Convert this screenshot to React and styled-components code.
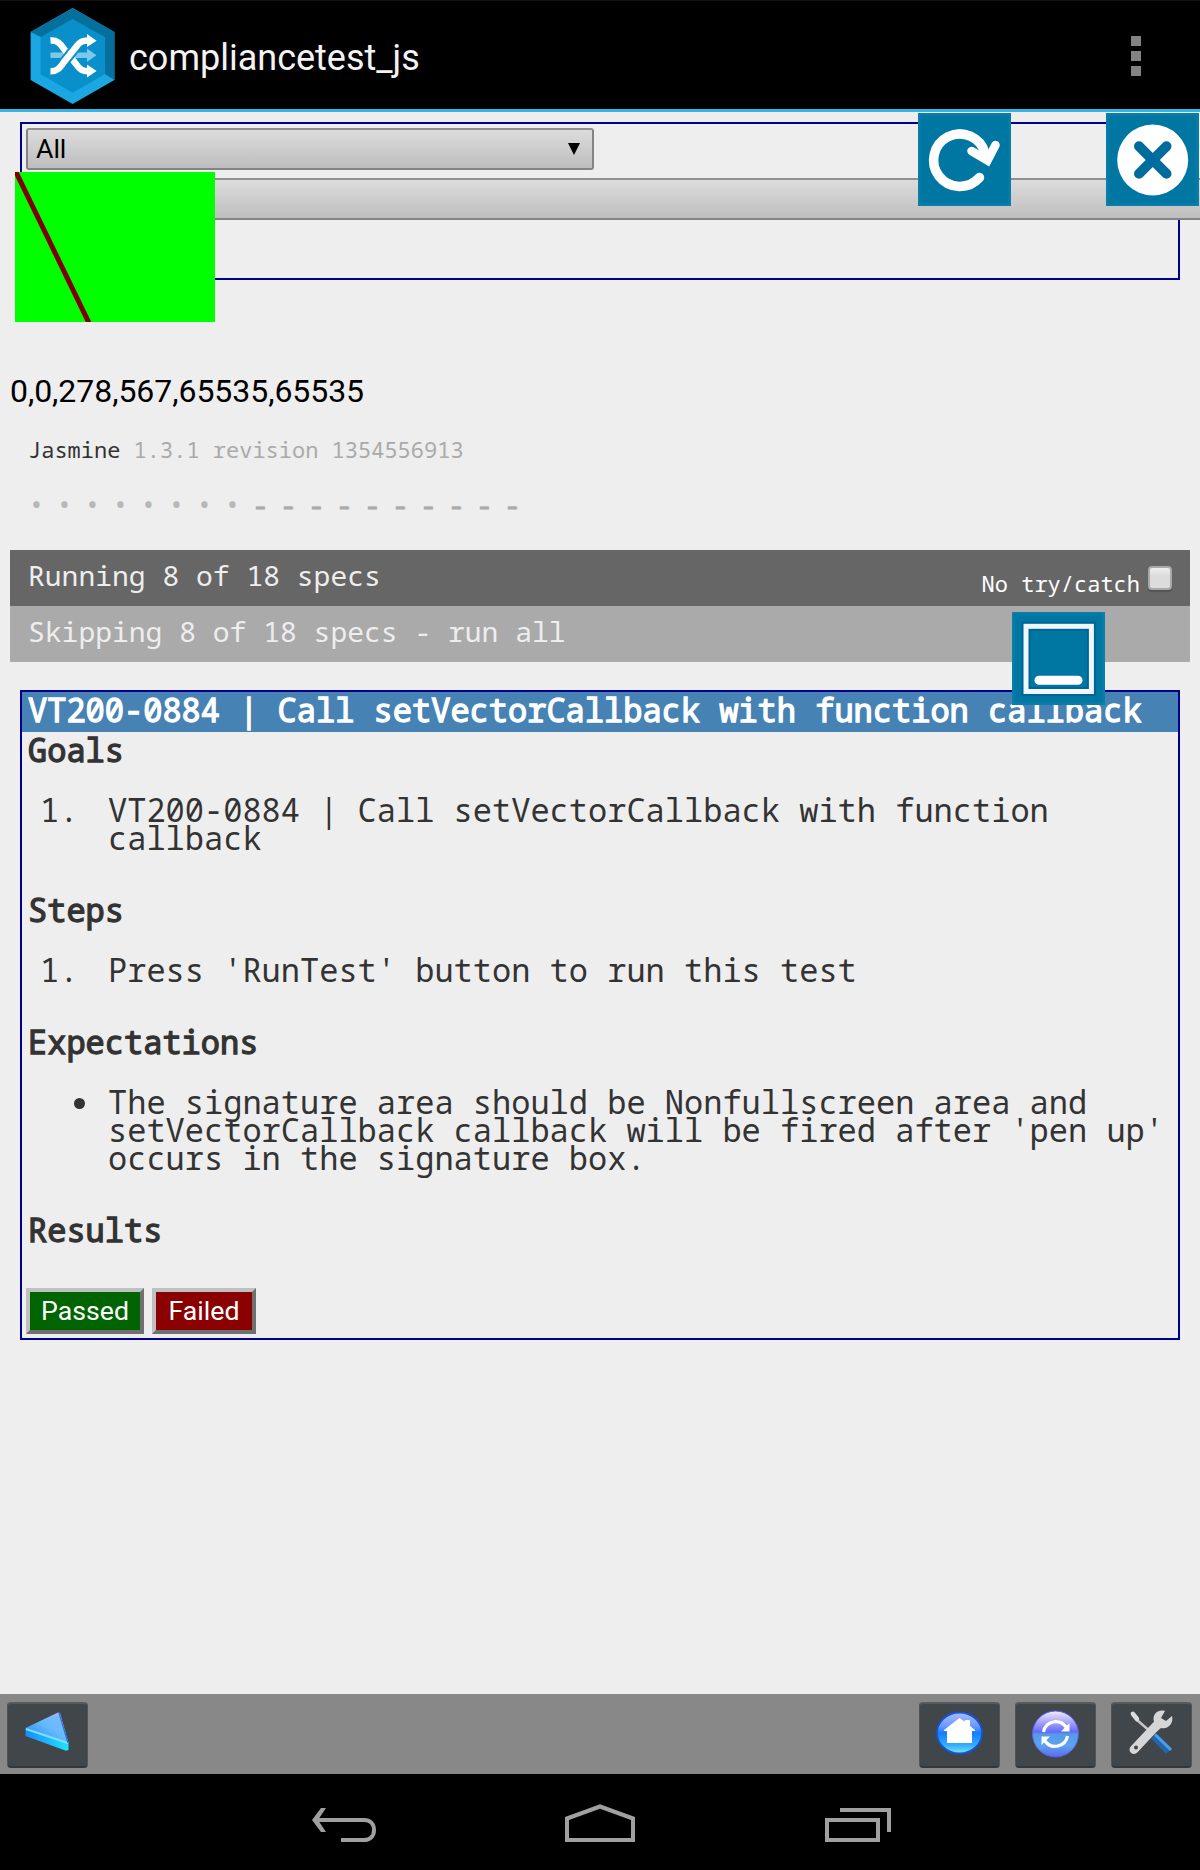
import React from "react";
import styled, { createGlobalStyle } from "styled-components";

const MONO = `"Noto Sans Mono", "DejaVu Sans Mono", monospace`;

const GlobalStyle = createGlobalStyle`
  * { box-sizing: border-box; }
  body { margin: 0; background: #eee; font-family: Roboto, sans-serif; }
`;

const Screen = styled.div`
  position: relative;
  display: flex;
  flex-direction: column;
  width: 1200px;
  height: 1870px;
  overflow: hidden;
  background: #eee;
`;

const ActionBar = styled.header`
  display: flex;
  align-items: center;
  height: 112px;
  flex: none;
  padding: 0 59px 0 30px;
  background: #000;
  border-bottom: 3px solid #33b5e5;
  box-shadow: inset 0 1px 0 #111;
`;

const AppTitle = styled.h1`
  flex: 1;
  margin: 7px 0 0 13px;
  font-size: 36px;
  line-height: 42px;
  font-weight: 400;
  color: #f3f3f3;
`;

const Overflow = styled.div`
  display: flex;
  flex-direction: column;
  gap: 5px;
  margin-top: 3px;
`;

const OverflowDot = styled.i`
  width: 10px;
  height: 10px;
  background: #848484;
`;

const Content = styled.main`
  flex: 1;
  display: flex;
  flex-direction: column;
  padding: 10px 10px 0;
`;

const Panel = styled.section`
  flex: none;
  margin: 0 10px;
  border: 2px solid #00008b;
`;

const Controls = styled(Panel)`
  display: flex;
  flex-direction: column;
  gap: 8px;
  height: 158px;
  padding: 4px;
`;

const SelectBox = styled.div`
  display: flex;
  flex: none;
  align-items: center;
  justify-content: space-between;
  width: ${(p) => p.$width}px;
  height: 42px;
  padding: 0 12px 0 8px;
  border: 2px solid #848484;
  border-top-color: #909090;
  border-radius: 3px;
  background: linear-gradient(#dcdcdc, #bebebe);
  font-size: 26.67px;
  line-height: 38px;
  color: #000;
`;

const VectorText = styled.p`
  margin: 92px 0 0;
  font-size: 32px;
  line-height: 38px;
  letter-spacing: -0.05px;
  color: #000;
`;

const Reporter = styled.div`
  font-family: ${MONO};
  font-size: 28px;
  line-height: 28px;
  color: #333;
`;

const Banner = styled.div`
  margin-top: 25px;
  padding-left: 18px;
  font-size: 22px;
  line-height: 28px;
  color: #333;
`;

const Version = styled.span`
  color: #aaa;
`;

const Symbols = styled.ul`
  display: flex;
  height: 28px;
  margin: 27px 0 0;
  padding: 0 0 0 18px;
  list-style: none;
`;

const Mark = styled.li`
  width: 28px;
  color: ${(p) => (p.$passed ? "#b8b8b8" : "#aaa")};
  -webkit-text-stroke: ${(p) => (p.$passed ? 0 : "0.8px")} currentColor;
`;

const Bar = styled.div`
  display: flex;
  justify-content: space-between;
  height: 56px;
  margin-top: ${(p) => (p.$skipped ? 0 : 32)}px;
  padding: 0 18px;
  line-height: 51px;
  color: #eee;
  background: ${(p) => (p.$skipped ? "#aaa" : "#666")};
`;

const TryCatch = styled.label`
  display: flex;
  gap: 8px;
  font-size: 22px;
  line-height: 67px;
  color: #fff;
`;

const Check = styled.span`
  width: 24px;
  height: 24px;
  margin-top: 16px;
  border: 2px solid #a9a9a9;
  border-radius: 4px;
  background: linear-gradient(#eee, #dcdcdc 40%, #dcdcdc);
  box-shadow: 0 2px 1px #555;
`;

const TestPanel = styled(Panel)`
  margin-top: 28px;
  height: 650px;
  font-family: ${MONO};
  font-size: 32px;
  line-height: 28px;
  color: #333;
`;

const TestTitle = styled.h2`
  height: 40px;
  margin: 0;
  padding: 4px 6px 0;
  font-size: 32px;
  line-height: 28px;
  font-weight: 400;
  -webkit-text-stroke: 1.3px currentColor;
  color: #fff;
  background: #4682b4;
  white-space: nowrap;
`;

const TestBody = styled.div`
  padding: 4px 0 0 6px;
`;

const Heading = styled.h3`
  margin: 0;
  font-size: 32px;
  line-height: 28px;
  font-weight: 400;
  -webkit-text-stroke: 1.3px currentColor;
`;

const Items = styled.div`
  display: flex;
  flex-direction: column;
  margin: 32px 0 44px;
`;

const Item = styled.div`
  display: grid;
  grid-template-columns: 80px 1fr;
  white-space: nowrap;
`;

const Ordinal = styled.span`
  padding-left: 12px;
`;

const Bullet = styled.span`
  width: 11px;
  height: 11px;
  margin: 10px 0 0 46px;
  border-radius: 50%;
  background: #333;
`;

const Results = styled.div`
  display: flex;
  gap: 8px;
  margin: 44px 0 0 -2px;
`;

const ResultButton = styled.button`
  width: ${(p) => p.$width}px;
  height: 46px;
  padding: 0;
  border: 4px solid;
  border-color: #c0c0c0 #707070 #707070 #c0c0c0;
  background: ${(p) => p.$color};
  color: #fff;
  font: 26.67px/36px Roboto, sans-serif;
`;

const Signature = styled.svg`
  position: absolute;
  left: 15px;
  top: 172px;
  background: #0f0;
`;

const FloatButton = styled.button`
  position: absolute;
  left: ${(p) => p.$x}px;
  top: ${(p) => p.$y}px;
  width: 93px;
  height: 93px;
  padding: 0;
  border: 0;
  background: #0077a3;
  box-shadow: inset 0 0 3px 2px #0d80a8;
  svg { display: block; }
`;

const Toolbar = styled.div`
  display: flex;
  flex: none;
  gap: 15px;
  height: 80px;
  padding: 8px 8px 8px 7px;
  background: #888;
`;

const ToolButton = styled.button`
  width: 81px;
  height: 66px;
  padding: 0;
  border: 1px solid #505558;
  border-top: 2px solid #555a5d;
  border-bottom: 2px solid #35383b;
  border-radius: 4px;
  background: #41464a;
  svg { display: block; margin: -2px -1px; }
`;

const Spacer = styled.div`
  flex: 1;
`;

const NavBar = styled.nav`
  flex: none;
  height: 96px;
  background: #000;
  display: flex;
  justify-content: center;
  align-items: flex-start;
  gap: 180px;
  padding-top: 28px;
`;

const NavIcon = ({ children }) => (
  <svg width="76" height="42" viewBox="0 0 76 42" fill="none" stroke="#a0a0a0" strokeWidth="4">
    {children}
  </svg>
);

const Logo = () => (
  <svg width="86" height="98" viewBox="30 6 86 98">
    <path d="M72.6 8 114.4 32V80L72.6 104 30.6 80V32Z" fill="#1ba8e2" />
    <path d="M72.6 8 114.4 32V80L104.7 74V37L72.6 40 40.6 37 30.6 32Z" fill="#06709d" />
    <path d="M72.6 19 104.7 37V74.3L72.6 92.7 40.6 74.3V37Z" fill="#0990ca" />
    <path d="M50.5 55.3H88" stroke="#7cc9ec" strokeWidth="5.5" />
    <path d="M87 48.5 96.4 55.3 87 62Z" fill="#7cc9ec" />
    <g fill="none">
      <path d="M50.500 40.500C57 40 60 43 64 49L76 64C80 70 83 71.300 88 71.300" stroke="#fff" strokeWidth="6.500" />
      <path d="M60 67 64 62 76 47C80 42 82 40.500 86 40.500" stroke="#0990ca" strokeWidth="10.500" />
      <path d="M50.500 71.300C57 71.500 60 68 64 62L76 47C80 41.500 83 40.500 88 40.500" stroke="#fff" strokeWidth="6.500" />
    </g>
    <path d="M87 34 96.6 40.7 87 47ZM87 64.5 96.6 71 87 77.5Z" fill="#fff" />
  </svg>
);

const ReloadGlyph = () => (
  <svg width="93" height="93" fill="none" stroke="#fff" strokeWidth="9.5" strokeLinecap="round">
    <path d="M61.5 64.5A26.2 26.2 0 1 1 67 40" />
    <path d="M53.5 38 69.5 47.5 77.5 32" strokeWidth="8.5" />
    <path d="M58 38 70 52 76 37 66 42Z" fill="#fff" stroke="none" />
  </svg>
);

const CloseGlyph = () => (
  <svg width="93" height="93">
    <circle cx="46.7" cy="47" r="35.5" fill="#fff" />
    <path d="M33 33.3 60.5 60.8M60.5 33.3 33 60.8" stroke="#006c9d" strokeWidth="10" strokeLinecap="round" />
  </svg>
);

const MinimizeGlyph = () => (
  <svg width="93" height="93" fill="none">
    <rect x="14" y="14.3" width="65.4" height="65.2" stroke="#00639a" strokeWidth="9" />
    <rect x="14" y="14.3" width="65.4" height="65.2" stroke="#eef7fb" strokeWidth="5" />
    <path d="M27 68.3H66" stroke="#fff" strokeWidth="9" strokeLinecap="round" />
  </svg>
);

const BackGlyph = () => (
  <svg width="81" height="66">
    <defs>
      <linearGradient id="face" x1="0" y1="1" x2="1" y2="0">
        <stop offset="0" stopColor="#1583f5" />
        <stop offset=".55" stopColor="#69baff" />
        <stop offset="1" stopColor="#b4b5f5" />
      </linearGradient>
      <linearGradient id="side">
        <stop offset="0" stopColor="#168cfb" />
        <stop offset="1" stopColor="#24e1ff" />
      </linearGradient>
    </defs>
    <path d="M18.500 26 51 10.500 53 11 61.500 41 Z" fill="url(#face)" />
    <path d="M30 22 52 13 58 36Z" fill="#62bcff" opacity=".5" />
    <path d="M18.500 26 61.500 40V48L59 48.800 18.500 34Z" fill="url(#side)" />
    <path d="M19 27 61 41" stroke="#7de1ff" strokeWidth="2" />
    <path d="M52 11 61 41" stroke="#2376df" strokeWidth="1.200" />
  </svg>
);

const HomeGlyph = () => (
  <svg width="81" height="66">
    <defs>
      <linearGradient id="homeOrb" x2="0" y2="1">
        <stop offset="0" stopColor="#a9bcff" />
        <stop offset=".35" stopColor="#6797ff" />
        <stop offset=".5" stopColor="#147bff" />
        <stop offset=".8" stopColor="#35adff" />
        <stop offset="1" stopColor="#78e9ff" />
      </linearGradient>
    </defs>
    <ellipse cx="40.500" cy="31" rx="22.500" ry="20.500" fill="url(#homeOrb)" stroke="#1454d5" strokeWidth="1.800" />
    <path d="M40.500 16.500 46 20.500V18.500H50.500V24L56 28.500H52.500V40.500H28.500V28.500H25Z" fill="#fff" stroke="#fff" strokeLinejoin="round" />
  </svg>
);

const SyncGlyph = () => (
  <svg width="81" height="66">
    <defs>
      <linearGradient id="syncOrb" x2="0" y2="1">
        <stop offset="0" stopColor="#f0edff" />
        <stop offset=".25" stopColor="#a6a2fa" />
        <stop offset=".46" stopColor="#6268fa" />
        <stop offset=".5" stopColor="#559ae8" />
        <stop offset=".75" stopColor="#5ba3ef" />
        <stop offset="1" stopColor="#6068ee" />
      </linearGradient>
    </defs>
    <circle cx="40.500" cy="32" r="23" fill="url(#syncOrb)" stroke="#5961df" />
    <g fill="none" stroke="#fff" strokeWidth="3.200">
      <path d="M28.500 30A12.500 12.500 0 0 1 51 25" />
      <path d="M52.500 34A12.500 12.500 0 0 1 30 39" />
    </g>
    <path d="M54.500 21V29.500H46ZM26.500 43V34.500H35Z" fill="#fff" />
  </svg>
);

const ToolsGlyph = () => (
  <svg width="81" height="66" strokeLinecap="round">
    <path d="M21 11 26 18 41 31" stroke="#c8c8c8" strokeWidth="2.500" fill="none" />
    <path d="M22 12 26 17" stroke="#ddd" strokeWidth="4.500" />
    <path d="M43 34 58 49" stroke="#2067ae" strokeWidth="8" strokeLinecap="butt" />
    <path d="M44 32.500 60 48" stroke="#4c9fe3" strokeWidth="3" strokeLinecap="butt" />
    <path d="M23 47.500 45 24" stroke="#d6d6d6" strokeWidth="9" />
    <path d="M54 9C46 7 41 13 43 20L40 25 45 30 50 26C57 28 63 21 61 14L55 19 50 16Z" fill="#d6d6d6" />
    <circle cx="25" cy="45.500" r="2" fill="#41464a" />
  </svg>
);

const Spec = ({ title, children }) => (
  <>
    <Heading>{title}</Heading>
    <Items>{children}</Items>
  </>
);

const MARKS = "••••••••----------".split("");

export default function App() {
  return (
    <Screen>
      <GlobalStyle />
      <ActionBar>
        <Logo />
        <AppTitle>compliancetest_js</AppTitle>
        <Overflow>
          <OverflowDot />
          <OverflowDot />
          <OverflowDot />
        </Overflow>
      </ActionBar>

      <Content>
        <Controls>
          <SelectBox $width={568}>
            <span>All</span>
            <svg width="12" height="12">
              <path d="M0 0H12L6 12Z" />
            </svg>
          </SelectBox>
          <SelectBox $width={1300} />
        </Controls>

        <VectorText>0,0,278,567,65535,65535</VectorText>

        <Reporter>
          <Banner>
            Jasmine <Version>1.3.1 revision 1354556913</Version>
          </Banner>
          <Symbols>
            {MARKS.map((m, i) => (
              <Mark key={i} $passed={m === "•"}>{m}</Mark>
            ))}
          </Symbols>
          <Bar>
            <span>Running 8 of 18 specs</span>
            <TryCatch>
              No try/catch
              <Check />
            </TryCatch>
          </Bar>
          <Bar $skipped>
            <span>Skipping 8 of 18 specs - run all</span>
          </Bar>
        </Reporter>

        <TestPanel>
          <TestTitle>VT200-0884 | Call setVectorCallback with function callback</TestTitle>
          <TestBody>
            <Spec title="Goals">
              <Item>
                <Ordinal>1.</Ordinal>
                <span>VT200-0884 | Call setVectorCallback with function<br />callback</span>
              </Item>
            </Spec>
            <Spec title="Steps">
              <Item>
                <Ordinal>1.</Ordinal>
                <span>Press 'RunTest' button to run this test</span>
              </Item>
            </Spec>
            <Spec title="Expectations">
              <Item>
                <Bullet />
                <span>
                  The signature area should be Nonfullscreen area and<br />
                  setVectorCallback callback will be fired after 'pen up'<br />
                  occurs in the signature box.
                </span>
              </Item>
            </Spec>
            <Heading>Results</Heading>
            <Results>
              <ResultButton $width={118} $color="#006400">Passed</ResultButton>
              <ResultButton $width={104} $color="#8b0000">Failed</ResultButton>
            </Results>
          </TestBody>
        </TestPanel>
      </Content>

      <Toolbar>
        <ToolButton><BackGlyph /></ToolButton>
        <Spacer />
        <ToolButton><HomeGlyph /></ToolButton>
        <ToolButton><SyncGlyph /></ToolButton>
        <ToolButton><ToolsGlyph /></ToolButton>
      </Toolbar>

      <NavBar>
        <NavIcon>
          <path d="M9 18H58C64 18 68 22 68 28S64 38 58 38H35" />
          <path d="M6 18 15 6H20L12 18 20 30H15Z" fill="#a0a0a0" stroke="none" />
        </NavIcon>
        <NavIcon>
          <path d="M5 38V16.500L38 4.500 71 16.500V38Z" />
        </NavIcon>
        <NavIcon>
          <path d="M9 18H60V38H9ZM22 8H71V30" />
        </NavIcon>
      </NavBar>

      <Signature width="200" height="150">
        <path d="M0 -2 75 153" stroke="#800000" strokeWidth="5" />
      </Signature>
      <FloatButton $x={918} $y={113}><ReloadGlyph /></FloatButton>
      <FloatButton $x={1106} $y={113}><CloseGlyph /></FloatButton>
      <FloatButton $x={1012} $y={612}><MinimizeGlyph /></FloatButton>
    </Screen>
  );
}
